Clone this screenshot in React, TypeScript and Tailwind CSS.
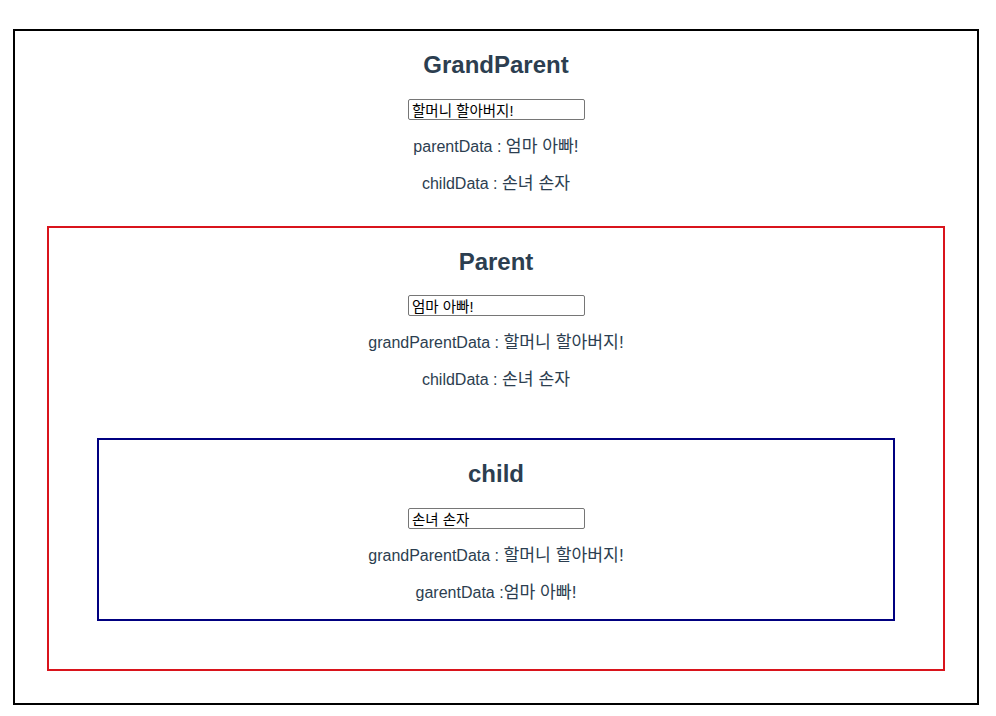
import React, { useState } from "react";

const font = "font-['Liberation_Sans','Noto_Sans_CJK_KR',sans-serif]";

function Field({ value, onChange }: { value: string; onChange: (v: string) => void }) {
  return (
    <div className="flex justify-center">
      <input
        value={value}
        onChange={(e) => onChange(e.target.value)}
        className="ml-[1px] box-border h-[21px] w-[177px] rounded-[2px] border border-[#767676] bg-white pl-[3px] pr-[2px] py-0 text-[14.5px] leading-[19px] text-black font-['Liberation_Sans','Noto_Sans_CJK_KR',sans-serif] outline-none"
      />
    </div>
  );
}

function Title({ children }: { children: React.ReactNode }) {
  return <h2 className="my-[20px] text-[24px] font-bold leading-[27.6px]">{children}</h2>;
}

function Ko({ children }: { children: React.ReactNode }) {
  return <span className="text-[17.2px]">{children}</span>;
}

function Line({ label, value }: { label: string; value: string }) {
  return (
    <p className="my-[16px] text-[16px] leading-[21px]">
      {label}
      <Ko>{value}</Ko>
    </p>
  );
}

export default function App() {
  const [g, setG] = useState("할머니 할아버지!");
  const [p, setP] = useState("엄마 아빠!");
  const [c, setC] = useState("손녀 손자");

  return (
    <div className={`${font} min-h-[716px] bg-white pt-[29px] text-center text-[#2c3e50]`}>
      <div className="ml-[13px] w-[966px] border-2 border-black">
        <Title>GrandParent</Title>
        <Field value={g} onChange={setG} />
        <Line label="parentData : " value={p} />
        <Line label="childData : " value={c} />
        <div className="mx-[32px] mb-[32px] mt-[32px] border-2 border-[#d9141c]">
          <Title>Parent</Title>
          <Field value={p} onChange={setP} />
          <Line label="grandParentData : " value={g} />
          <Line label="childData : " value={c} />
          <div className="m-[48px] border-2 border-[#000080]">
            <Title>child</Title>
            <Field value={c} onChange={setC} />
            <Line label="grandParentData : " value={g} />
            <Line label="garentData :" value={p} />
          </div>
        </div>
      </div>
    </div>
  );
}
